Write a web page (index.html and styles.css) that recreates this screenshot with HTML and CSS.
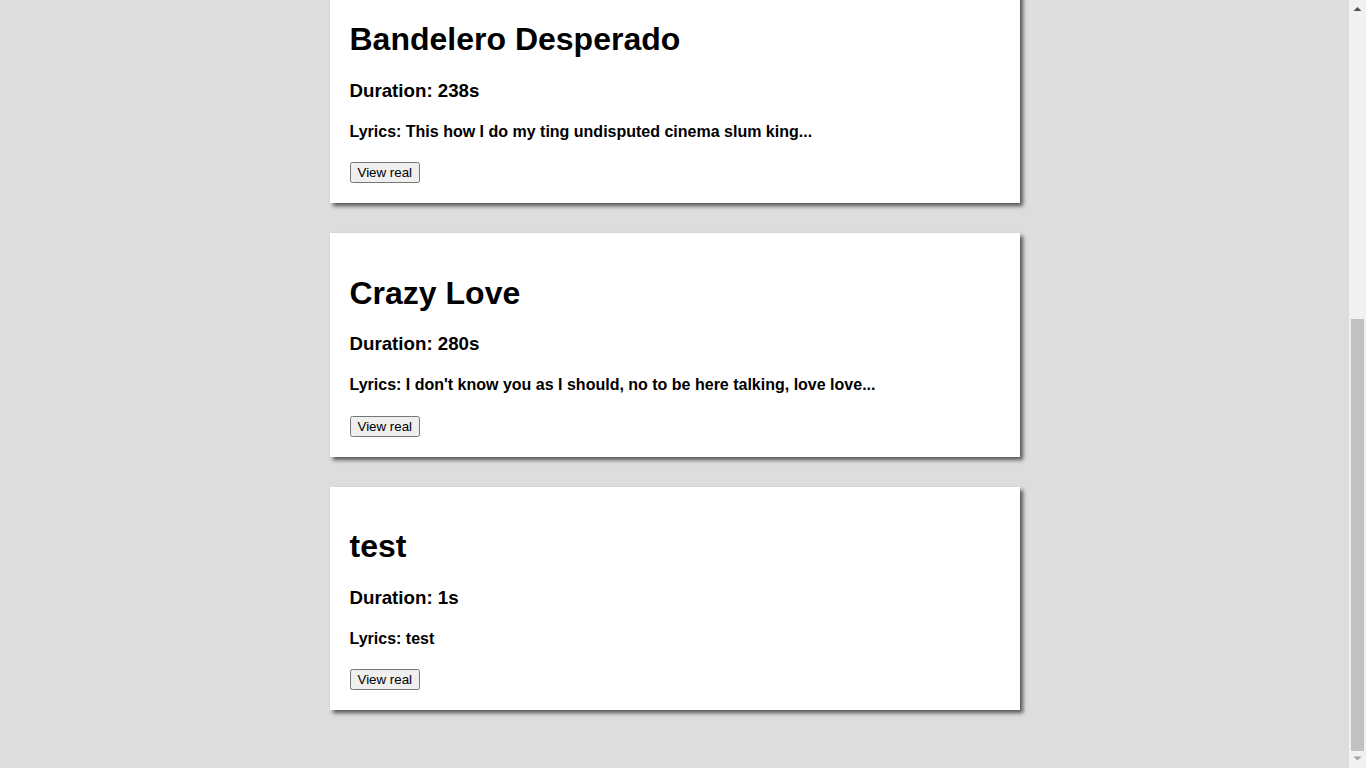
FILE: index.html
```html
<!DOCTYPE html>
<html lang="en">
<head>
<meta charset="utf-8">
<title>Songs</title>
<link rel="stylesheet" href="styles.css">
</head>
<body>
<main class="song-list">
  <section class="song-card">
    <h1 class="song-title">Lose Yourself</h1>
    <h3 class="song-duration">Duration: 326s</h3>
    <h4 class="song-lyrics">Lyrics: Look, if you had one shot, or one opportunity...</h4>
    <button class="view-btn" type="button">View real</button>
  </section>
  <section class="song-card">
    <h1 class="song-title">Starboy</h1>
    <h3 class="song-duration">Duration: 230s</h3>
    <h4 class="song-lyrics">Lyrics: I'm tryna put you in the worst mood, ah...</h4>
    <button class="view-btn" type="button">View real</button>
  </section>
  <section class="song-card">
    <h1 class="song-title">Bandelero Desperado</h1>
    <h3 class="song-duration">Duration: 238s</h3>
    <h4 class="song-lyrics">Lyrics: This how I do my ting undisputed cinema slum king...</h4>
    <button class="view-btn" type="button">View real</button>
  </section>
  <section class="song-card">
    <h1 class="song-title">Crazy Love</h1>
    <h3 class="song-duration">Duration: 280s</h3>
    <h4 class="song-lyrics">Lyrics: I don't know you as I should, no to be here talking, love love...</h4>
    <button class="view-btn" type="button">View real</button>
  </section>
  <section class="song-card">
    <h1 class="song-title">test</h1>
    <h3 class="song-duration">Duration: 1s</h3>
    <h4 class="song-lyrics">Lyrics: test</h4>
    <button class="view-btn" type="button">View real</button>
  </section>
</main>
<div class="fake-scrollbar" aria-hidden="true">
  <div class="sb-btn">
    <svg width="17" height="17" viewBox="0 0 17 17"><path d="M4.5 11H12.5L8.5 7Z" fill="#505050"/></svg>
  </div>
  <div class="sb-track">
    <div class="sb-thumb"></div>
  </div>
  <div class="sb-btn">
    <svg width="17" height="17" viewBox="0 0 17 17"><path d="M4.5 5.5H12.5L8.5 9.5Z" fill="#a3a3a3"/></svg>
  </div>
</div>
<script src="script.js"></script>
</body>
</html>
```
FILE: styles.css
```css
html {
  background: #dddddd;
}
body {
  margin: 0;
  padding-right: 17px;
  font-family: "Liberation Sans", Arial, sans-serif;
  color: #000;
  background: #dddddd;
}
.song-list {
  display: flex;
  flex-direction: column;
  align-items: center;
  gap: 30px;
  padding: 12px 0 58px;
}
.song-card {
  width: 650px;
  padding: 20px;
  background: #ffffff;
  box-shadow: 3px 3px 4px #555555;
}
.song-title {
  font-size: 32px;
  font-weight: bold;
  margin: 21.44px 0;
}
.song-duration {
  font-size: 18.72px;
  font-weight: bold;
  margin: 18.72px 0;
}
.song-lyrics {
  font-size: 16px;
  font-weight: bold;
  margin: 21.28px 0;
}
.view-btn {
  font-family: "Liberation Sans", Arial, sans-serif;
  font-size: 13.333px;
  display: block;
}
.fake-scrollbar {
  position: fixed;
  top: 0;
  right: 0;
  bottom: 0;
  width: 17px;
  background: #f1f1f1;
  display: flex;
  flex-direction: column;
}
.sb-btn {
  height: 17px;
  flex: none;
}
.sb-btn svg {
  display: block;
}
.sb-track {
  flex: 1;
  padding: 302px 2px 0;
}
.sb-thumb {
  height: 432px;
  background: #c1c1c1;
}
```
FILE: script.js
```js
window.scrollTo(0, document.documentElement.scrollHeight);
```
